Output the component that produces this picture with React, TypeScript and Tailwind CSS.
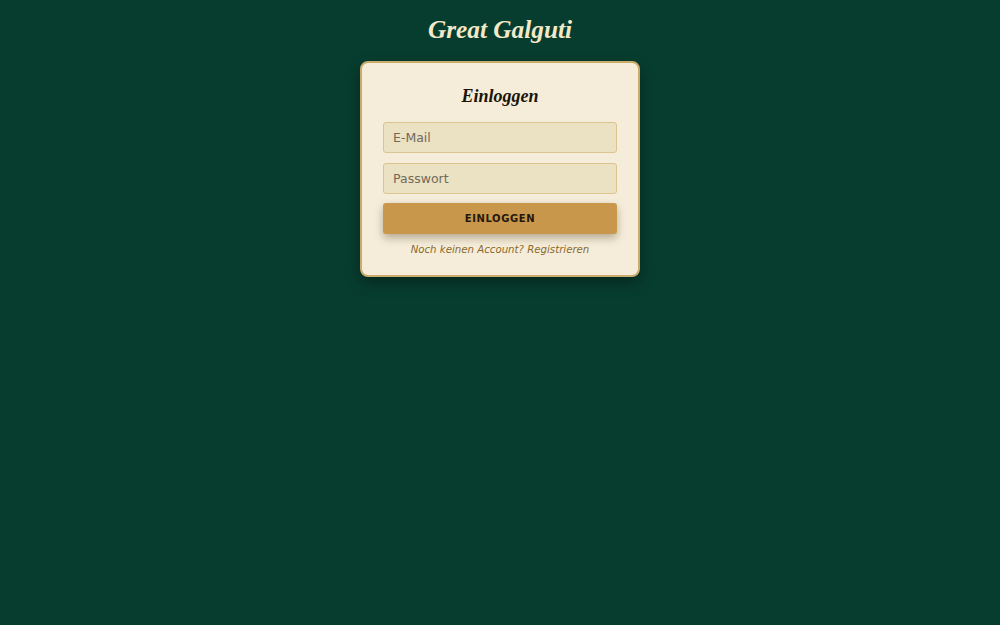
export default function App() {
  return (
    <div className="min-h-screen w-full bg-[#073d2f] flex flex-col items-center font-['DejaVu_Sans',sans-serif]">
      <h1 className="mt-[12px] text-[25.3px] leading-[34px] font-bold italic text-[#f3e9c8] font-['Liberation_Serif',serif]">
        Great Galguti
      </h1>
      <div className="mt-[15px] w-[280px] rounded-lg border-2 border-[#c9ab6c] bg-[#f5edda] px-[21px] pt-[21px] pb-[18px] shadow-[0_6px_14px_rgba(0,0,0,0.35)]">
        <h2 className="text-center text-[18px] leading-[24px] font-bold italic text-[#1c1408] font-['Liberation_Serif',serif]">
          Einloggen
        </h2>
        <form className="mt-[14px] flex flex-col gap-[10px]" onSubmit={(e) => e.preventDefault()}>
          <input
            type="email"
            placeholder="E-Mail"
            className="h-[31px] w-full rounded-[3px] border border-[#dcc690] bg-[#ebe1c3] px-[9px] text-[12.5px] text-[#3a2d14] placeholder:text-[#716a5a] outline-none"
          />
          <input
            type="password"
            placeholder="Passwort"
            className="h-[31px] w-full rounded-[3px] border border-[#dcc690] bg-[#ebe1c3] px-[9px] text-[12.5px] text-[#3a2d14] placeholder:text-[#716a5a] outline-none"
          />
          <button
            type="submit"
            className="-mt-px h-[31px] w-full rounded-[3px] bg-[#c8974b] text-[10px] font-bold tracking-[0.06em] text-[#24180a] shadow-[0_4px_8px_rgba(60,40,10,0.35)]"
          >
            EINLOGGEN
          </button>
        </form>
        <p className="mt-[8px] text-center text-[10.2px] italic text-[#8a6a2c]">
          Noch keinen Account? Registrieren
        </p>
      </div>
    </div>
  );
}
